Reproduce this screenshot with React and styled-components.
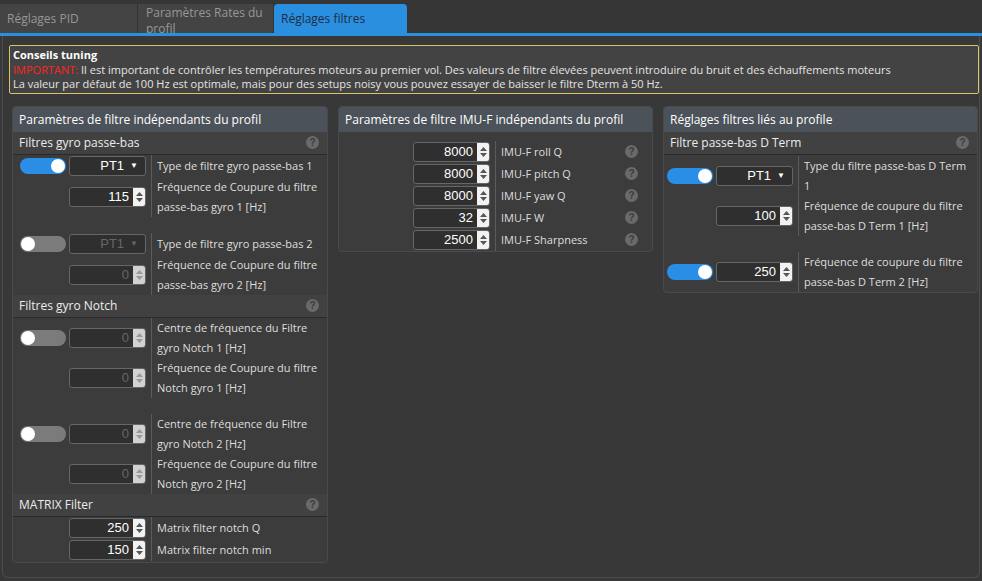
import React from 'react';
import styled, { createGlobalStyle } from 'styled-components';

const GlobalStyle = createGlobalStyle`
  html, body {
    margin: 0;
    padding: 0;
  }
  body {
    background: #383838;
    font-family: "Open Sans", "Liberation Sans", sans-serif;
    color: #e0e0e0;
  }
`;

const Page = styled.div`
  width: 982px;
  height: 581px;
  overflow: hidden;
  background: #383838;
  display: flex;
  flex-direction: column;
`;

const TabBar = styled.div`
  display: flex;
  height: 36px;
  box-sizing: border-box;
  padding-top: 4px;
  background: #363636;
  border-bottom: 3px solid #2b8fe0;
`;

const Tab = styled.div`
  width: ${props => props.$w}px;
  height: 29px;
  box-sizing: border-box;
  padding: ${props => props.$multi ? '1px 8px 0' : '0 7px'};
  display: flex;
  align-items: ${props => props.$multi ? 'flex-start' : 'center'};
  overflow: hidden;
  font-size: 12px;
  line-height: 16px;
  color: ${props => props.$active ? '#1c2d42' : '#979797'};
  background: ${props => props.$active ? '#2b8fe0' : '#444'};
  border-right: 1px solid #333;
  border-radius: ${props => props.$active ? '4px 4px 0 0' : '0'};
`;

const Content = styled.div`
  flex: 1;
  margin: 0 2px 3px;
  border: 1px solid #4e4e4e;
  border-top: none;
  border-radius: 0 0 6px 6px;
  padding: 9px 0 0 6px;
`;

const Notice = styled.div`
  width: 970px;
  box-sizing: border-box;
  border: 1px solid #d8c26a;
  border-radius: 2px;
  background: #434343;
  padding: 2px 3px 1px;
  font-size: 11px;
  line-height: 14.5px;
  color: #e4e4e4;
`;

const NoticeTitle = styled.div`
  font-weight: 700;
  color: #fff;
`;

const Important = styled.span`
  color: #ff2323;
`;

const Columns = styled.div`
  display: flex;
  align-items: flex-start;
  gap: 10px;
  margin: 12px 0 0 3px;
`;

const Panel = styled.div`
  width: ${props => props.$w}px;
  box-sizing: border-box;
  background: #3c3c3c;
  border: 1px solid #4a4a4a;
  border-radius: 4px;
  overflow: hidden;
`;

const PanelHeader = styled.div`
  height: 25px;
  display: flex;
  align-items: center;
  padding: 0 6px;
  background: #4c5259;
  font-size: 12px;
  color: #fff;
`;

const SubHeader = styled.div`
  height: 23px;
  box-sizing: border-box;
  display: flex;
  align-items: center;
  justify-content: space-between;
  padding: 0 8px 0 6px;
  background: #414141;
  border-bottom: 1px solid #2a2a2a;
  font-size: 12px;
  color: #ececec;
`;

const Body = styled.div`
  padding-top: ${props => props.$pt || 0}px;
  padding-bottom: ${props => props.$pb || 0}px;
`;

const Group = styled.div`
  & + & {
    margin-top: 16px;
  }
`;

const Row = styled.div`
  display: flex;
  min-height: ${props => props.$h || 22}px;
`;

const Controls = styled.div`
  width: ${props => props.$w}px;
  flex-shrink: 0;
  box-sizing: border-box;
  display: flex;
  align-items: center;
  justify-content: flex-end;
  gap: 2px;
  padding-right: 5px;
  border-right: 1px solid #5c5c5c;
`;

const Label = styled.div`
  flex: 1;
  display: flex;
  align-items: center;
  justify-content: space-between;
  padding: 0 ${props => props.$help ? 14 : 2}px 0 5px;
  font-size: 11px;
  line-height: 20px;
  color: #dedede;
`;

const Track = styled.div`
  width: 46px;
  height: 16px;
  box-sizing: border-box;
  padding: 1px;
  margin-right: 1px;
  border-radius: 8px;
  display: flex;
  justify-content: ${props => props.$on ? 'flex-end' : 'flex-start'};
  background: ${props => props.$on ? '#2b8ee6' : '#7b7b7b'};
`;

const Knob = styled.div`
  width: 14px;
  height: 14px;
  border-radius: 50%;
  background: #fff;
`;

const Box = styled.div`
  width: 77px;
  height: 20px;
  box-sizing: border-box;
  display: flex;
  align-items: center;
  justify-content: flex-end;
  border: 1px solid #666;
  border-radius: 3px;
  background: #2f2f2f;
  font-family: "Liberation Sans", Arial, sans-serif;
  font-size: 13px;
  color: ${props => props.$off ? '#666' : '#fff'};
  overflow: hidden;
`;

const SelectValue = styled.span`
  padding-right: 6px;
`;

const Caret = styled.span`
  font-size: 8px;
  padding-right: 7px;
`;

const NumValue = styled.span`
  padding-right: 4px;
`;

const Spinner = styled.div`
  width: 12px;
  align-self: stretch;
  display: flex;
  flex-direction: column;
  align-items: center;
  justify-content: center;
  gap: 2px;
  background: ${props => props.$off ? '#d2d2d2' : '#f2f2f2'};
`;

const Help = styled.span`
  width: 13px;
  height: 13px;
  flex-shrink: 0;
  border-radius: 50%;
  background: #6a6a6a;
  display: inline-flex;
  align-items: center;
  justify-content: center;
  font-family: "Liberation Sans", Arial, sans-serif;
  font-size: 10px;
  font-weight: 700;
  color: #3c3c3c;
`;

const Toggle = ({ on }) => (
  <Track $on={on}>
    <Knob />
  </Track>
);

const Select = ({ value, off }) => (
  <Box $off={off}>
    <SelectValue>{value}</SelectValue>
    <Caret>▼</Caret>
  </Box>
);

const Arrow = ({ up, off }) => (
  <svg width="7" height="4" viewBox="0 0 7 4">
    <path d={up ? 'M0 4 L3.5 0 L7 4 Z' : 'M0 0 L3.5 4 L7 0 Z'} fill={off ? '#999' : '#555'} />
  </svg>
);

const NumberInput = ({ value, off }) => (
  <Box $off={off}>
    <NumValue>{value}</NumValue>
    <Spinner $off={off}>
      <Arrow up off={off} />
      <Arrow off={off} />
    </Spinner>
  </Box>
);

const HelpIcon = () => <Help>?</Help>;

const imuRows = [
  ['8000', 'IMU-F roll Q'],
  ['8000', 'IMU-F pitch Q'],
  ['8000', 'IMU-F yaw Q'],
  ['32', 'IMU-F W'],
  ['2500', 'IMU-F Sharpness'],
];

const LeftPanel = () => (
  <Panel $w={316}>
    <PanelHeader>Paramètres de filtre indépendants du profil</PanelHeader>
    <SubHeader>Filtres gyro passe-bas <HelpIcon /></SubHeader>
    <Body>
      <Group>
        <Row>
          <Controls $w={139}><Toggle on /><Select value="PT1" /></Controls>
          <Label>Type de filtre gyro passe-bas 1</Label>
        </Row>
        <Row $h={40}>
          <Controls $w={139}><NumberInput value="115" /></Controls>
          <Label>Fréquence de Coupure du filtre passe-bas gyro 1 [Hz]</Label>
        </Row>
      </Group>
      <Group>
        <Row>
          <Controls $w={139}><Toggle /><Select value="PT1" off /></Controls>
          <Label>Type de filtre gyro passe-bas 2</Label>
        </Row>
        <Row $h={40}>
          <Controls $w={139}><NumberInput value="0" off /></Controls>
          <Label>Fréquence de Coupure du filtre passe-bas gyro 2 [Hz]</Label>
        </Row>
      </Group>
    </Body>
    <SubHeader>Filtres gyro Notch <HelpIcon /></SubHeader>
    <Body>
      <Group>
        <Row $h={40}>
          <Controls $w={139}><Toggle /><NumberInput value="0" off /></Controls>
          <Label>Centre de fréquence du Filtre gyro Notch 1 [Hz]</Label>
        </Row>
        <Row $h={40}>
          <Controls $w={139}><NumberInput value="0" off /></Controls>
          <Label>Fréquence de Coupure du filtre Notch gyro 1 [Hz]</Label>
        </Row>
      </Group>
      <Group>
        <Row $h={40}>
          <Controls $w={139}><Toggle /><NumberInput value="0" off /></Controls>
          <Label>Centre de fréquence du Filtre gyro Notch 2 [Hz]</Label>
        </Row>
        <Row $h={40}>
          <Controls $w={139}><NumberInput value="0" off /></Controls>
          <Label>Fréquence de Coupure du filtre Notch gyro 2 [Hz]</Label>
        </Row>
      </Group>
    </Body>
    <SubHeader>MATRIX Filter <HelpIcon /></SubHeader>
    <Body $pb={1}>
      <Group>
        <Row>
          <Controls $w={139}><NumberInput value="250" /></Controls>
          <Label>Matrix filter notch Q</Label>
        </Row>
        <Row>
          <Controls $w={139}><NumberInput value="150" /></Controls>
          <Label>Matrix filter notch min</Label>
        </Row>
      </Group>
    </Body>
  </Panel>
);

const ImuPanel = () => (
  <Panel $w={315}>
    <PanelHeader>Paramètres de filtre IMU-F indépendants du profil</PanelHeader>
    <Body $pt={9}>
      <Group>
        {imuRows.map(([value, label]) => (
          <Row key={label}>
            <Controls $w={157}><NumberInput value={value} /></Controls>
            <Label $help>{label} <HelpIcon /></Label>
          </Row>
        ))}
      </Group>
    </Body>
  </Panel>
);

const ProfilePanel = () => (
  <Panel $w={315}>
    <PanelHeader>Réglages filtres liés au profile</PanelHeader>
    <SubHeader>Filtre passe-bas D Term <HelpIcon /></SubHeader>
    <Body $pt={1}>
      <Group>
        <Row $h={40}>
          <Controls $w={135}><Toggle on /><Select value="PT1" /></Controls>
          <Label>Type du filtre passe-bas D Term 1</Label>
        </Row>
        <Row $h={40}>
          <Controls $w={135}><NumberInput value="100" /></Controls>
          <Label>Fréquence de coupure du filtre passe-bas D Term 1 [Hz]</Label>
        </Row>
      </Group>
      <Group>
        <Row $h={40}>
          <Controls $w={135}><Toggle on /><NumberInput value="250" /></Controls>
          <Label>Fréquence de coupure du filtre passe-bas D Term 2 [Hz]</Label>
        </Row>
      </Group>
    </Body>
  </Panel>
);

export default function App() {
  return (
    <Page>
      <GlobalStyle />
      <TabBar>
        <Tab $w={138}>Réglages PID</Tab>
        <Tab $w={136} $multi>Paramètres Rates du profil</Tab>
        <Tab $w={134} $active>Réglages filtres</Tab>
      </TabBar>
      <Content>
        <Notice>
          <NoticeTitle>Conseils tuning</NoticeTitle>
          <div>
            <Important>IMPORTANT:</Important> Il est important de contrôler les températures moteurs au premier vol. Des valeurs de filtre élevées peuvent introduire du bruit et des échauffements moteurs
          </div>
          <div>La valeur par défaut de 100 Hz est optimale, mais pour des setups noisy vous pouvez essayer de baisser le filtre Dterm à 50 Hz.</div>
        </Notice>
        <Columns>
          <LeftPanel />
          <ImuPanel />
          <ProfilePanel />
        </Columns>
      </Content>
    </Page>
  );
}
